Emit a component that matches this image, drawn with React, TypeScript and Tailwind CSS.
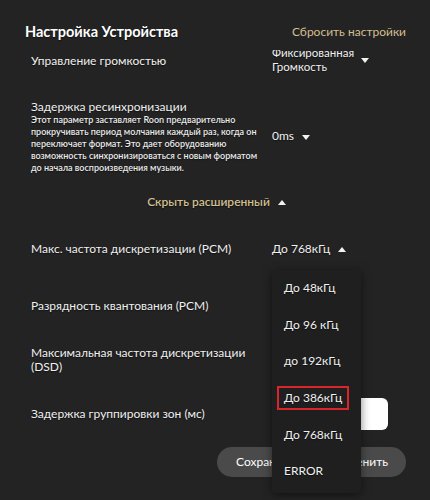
import { useState } from "react";

const OPTIONS = ["До 48кГц", "До 96 кГц", "до 192кГц", "До 386кГц", "До 768кГц", "ERROR"];

function Caret({ up = false, className = "ml-[8px]" }: { up?: boolean; className?: string }) {
  return (
    <svg width="8" height="5" viewBox="0 0 8 5" className={`flex-shrink-0 ${className}`}>
      <path d={up ? "M0 5 L4 0 L8 5 Z" : "M0 0 L4 5 L8 0 Z"} fill="#f2f2f2" />
    </svg>
  );
}

function Row({
  label,
  children,
  className = "",
}: {
  label: React.ReactNode;
  children?: React.ReactNode;
  className?: string;
}) {
  return (
    <div className={`flex items-center ${className}`}>
      <div className="w-[241px] flex-shrink-0 pr-1">{label}</div>
      <div className="flex-1 relative flex items-center">{children}</div>
    </div>
  );
}

export default function App() {
  const [hover] = useState(3);

  return (
    <div
      className="w-full h-[500px] bg-[#232323] text-[#f0f0f0] overflow-hidden flex flex-col relative"
      style={{ fontFamily: "Lato, Roboto, sans-serif", textShadow: "0 1px 1px rgba(0,0,0,0.5)" }}
    >
      {/* Header */}
      <div className="h-[50px] flex-shrink-0 flex items-start justify-between pl-[25px] pr-[24px] pt-[22px] bg-[#232323] relative z-10">
        <h1 className="text-[14.5px] leading-[20px] font-bold text-white">Настройка Устройства</h1>
        <button className="text-[12px] leading-[20px] text-[#d3bf8f]">Сбросить настройки</button>
      </div>

      {/* Content */}
      <div className="flex-1 overflow-hidden">
        <div className="pl-[31px] pr-[24px] mt-[-4px] text-[12px]">
          <Row label={<span className="leading-[16px] block mt-[1px]">Управление громкостью</span>}>
            <span className="text-[11.5px] leading-[14px] whitespace-nowrap">
              Фиксированная
              <br />
              Громкость
            </span>
            <Caret className="ml-[7px]" />
          </Row>

          <Row className="mt-[26px]" label={
            <div>
              <div className="text-[12px] leading-[14px]">Задержка ресинхронизации</div>
              <p className="text-[9px] leading-[12px] font-semibold text-[#ececec]">
                Этот параметр заставляет Roon предварительно прокручивать период молчания каждый раз, когда он
                переключает формат. Это дает оборудованию возможность синхронизироваться с новым форматом до начала
                воспроизведения музыки.
              </p>
            </div>
          }>
            <span className="leading-[16px] mt-[-3px]">0ms</span>
            <Caret />
          </Row>

          <div className="mt-[20px] flex items-center justify-center pr-[4px] text-[12px] leading-[16px] font-semibold text-[#d3bf8f]">
            Скрыть расширенный
            <Caret up />
          </div>

          <Row className="mt-[31px]" label={<span className="leading-[16px] block">Макс. частота дискретизации (PCM)</span>}>
            <span className="leading-[16px]">До 768кГц</span>
            <Caret up />
            {/* Dropdown menu */}
            <div className="absolute left-0 top-[29px] w-[89px] bg-[#1f1f1f] rounded-[4px] shadow-[0_2px_10px_rgba(0,0,0,0.5)] z-20 pb-[3px]">
              {OPTIONS.map((o, i) => (
                <div key={o} className="h-[36.6px] flex items-center px-[5px]">
                  <div
                    className={`w-[72px] h-[24px] flex items-center text-[12px] whitespace-nowrap ${
                      i === hover ? "border-2 border-[#d8262c] pl-[5px]" : "pl-[7px]"
                    }`}
                  >
                    {o}
                  </div>
                </div>
              ))}
            </div>
          </Row>

          <Row className="mt-[41px]" label={<span className="leading-[16px] block">Разрядность квантования (PCM)</span>} />

          <Row className="mt-[32px]" label={
            <span className="leading-[14px] block">
              Максимальная частота дискретизации
              <br />
              (DSD)
            </span>
          } />

          <Row className="mt-[24px]" label={<span className="leading-[16px] block">Задержка группировки зон (мс)</span>}>
            <div className="w-[116px] h-[32px] bg-white rounded-[6px]" />
          </Row>

          <div className="mt-[17px] flex justify-end gap-[8px]">
            <button className="h-[30px] w-[100px] rounded-full bg-[#4a4a4a] text-[12px] text-white text-left pl-[19px]">
              Сохранить
            </button>
            <button className="h-[30px] w-[81px] rounded-full bg-[#4a4a4a] text-[12px] text-white text-right pr-[18px]">
              Отменить
            </button>
          </div>
        </div>
      </div>
    </div>
  );
}
